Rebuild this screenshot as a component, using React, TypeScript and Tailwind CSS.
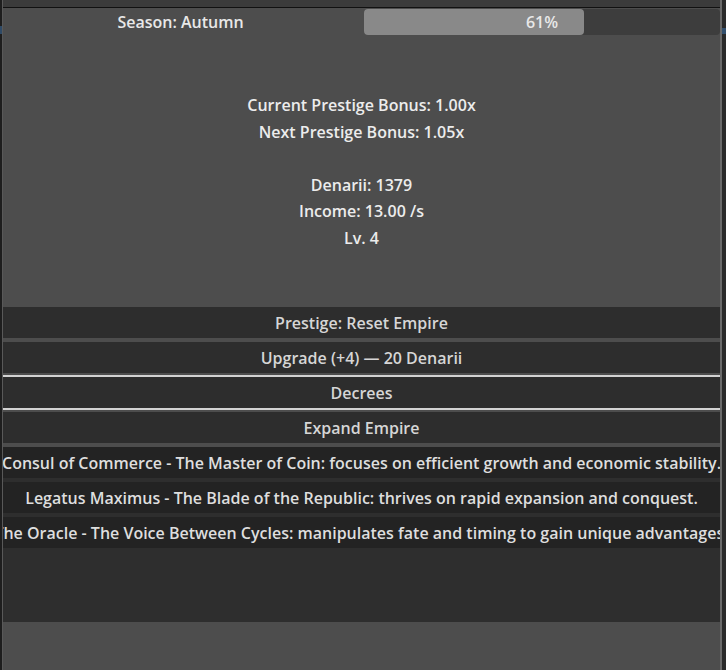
import React from 'react';

const font = { fontFamily: '"Open Sans", "Noto Sans", sans-serif' };

const buttons = ['Prestige: Reset Empire', 'Upgrade (+4) — 20 Denarii', 'Decrees', 'Expand Empire'];

const advisors = [
  'Consul of Commerce - The Master of Coin: focuses on efficient growth and economic stability.',
  'Legatus Maximus - The Blade of the Republic: thrives on rapid expansion and conquest.',
  'The Oracle - The Voice Between Cycles: manipulates fate and timing to gain unique advantages.',
];

const stats = ['Current Prestige Bonus: 1.00x', 'Next Prestige Bonus: 1.05x', '', 'Denarii: 1379', 'Income: 13.00 /s', 'Lv. 4'];

const App: React.FC = () => {
  const progress = 61;

  return (
    <div className="flex h-[670px] w-[726px] overflow-hidden bg-[#262626] font-semibold" style={font}>
      <div className="flex w-[2px] flex-col bg-[#1e1e1e]">
        <div className="mt-[26px] h-[8px] bg-[#2f4a66]" />
      </div>
      <div className="w-[1px] bg-[#595959]" />

      <div className="flex min-w-0 flex-1 flex-col">
        <div className="h-[7px] bg-[#3b3b3b]" />
        <div className="h-[1px] bg-[#111111]" />

        <main className="flex flex-1 flex-col bg-[#4d4d4d]">
          <div className="flex h-[27px]">
            <div className="flex flex-1 items-center justify-center pr-[6px] text-[16px] text-[#e8e8e8]">Season: Autumn</div>
            <div className="relative mt-[1px] h-[26px] w-[356px] rounded-[4px] bg-[#3d3d3d]">
              <div className="h-full rounded-[4px] bg-[#898989]" style={{ width: `calc(${progress}% + 3px)` }} />
              <div className="absolute inset-0 flex items-center justify-center text-[16px] text-[#e8e8e8]">{progress}%</div>
            </div>
          </div>

          <div className="flex h-[272px] flex-col items-center pt-[57px] text-[16px] leading-[26.6px] text-[#ececec]">
            {stats.map((s, i) => (
              <div key={i} className="h-[26.6px]">{s}</div>
            ))}
          </div>

          <div className="flex flex-col gap-[4px]">
            {buttons.map((b) => (
              <div
                key={b}
                className={`flex h-[31px] items-center justify-center bg-[#2d2d2d] text-[16px] text-[#d6d6d6] ${
                  b === 'Decrees' ? 'shadow-[0_-2px_0_#d2d2d2,0_2px_0_#d2d2d2]' : ''
                }`}
              >
                {b}
              </div>
            ))}
          </div>

          <div className="mt-[4px] flex h-[175px] flex-col gap-[4px] bg-[#2e2e2e]">
            {advisors.map((a) => (
              <div
                key={a}
                className="flex h-[31px] items-center justify-center overflow-hidden whitespace-nowrap bg-[#232323] text-[16px] text-[#dedede]"
              >
                {a}
              </div>
            ))}
          </div>
        </main>
      </div>

      <div className="w-[2px] bg-[#6a6a6a]" />
      <div className="flex w-[4px] flex-col bg-[#2a2a2a]">
        <div className="mt-[28px] h-[6px] bg-[#33506e]" />
      </div>
    </div>
  );
};

export default App;
